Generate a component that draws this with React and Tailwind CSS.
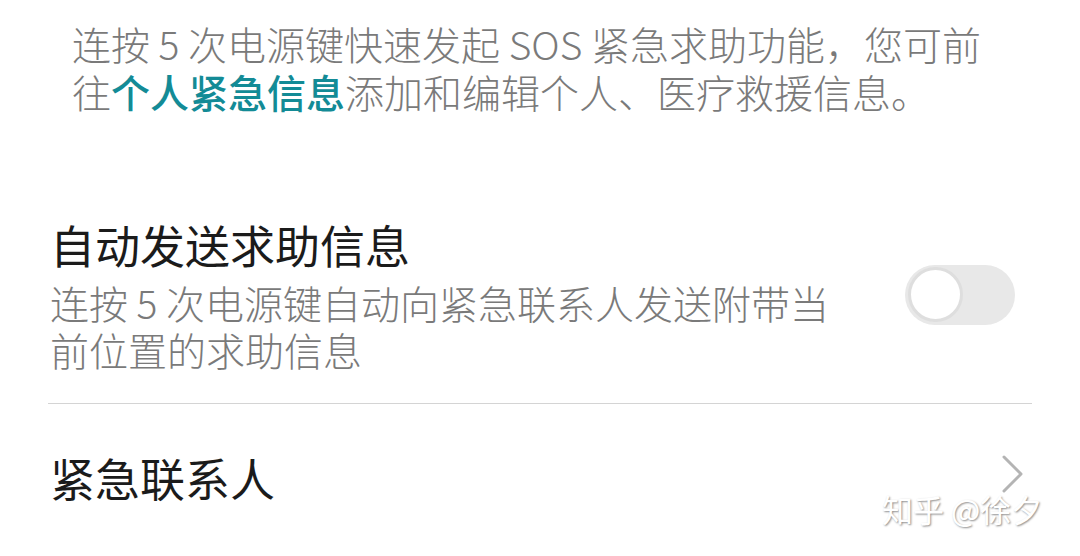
export default function App() {
  return (
    <div
      className="relative h-[556px] w-[1080px] overflow-hidden bg-white"
      style={{ fontFamily: '"Noto Sans CJK SC", "Noto Sans", sans-serif' }}
    >
      {/* 顶部说明 */}
      <p className="pl-[72px] pt-[19px] text-[39px] font-light leading-[48px] text-[#7a7a7a]">
        连按 5 次电源键快速发起 SOS 紧急求助功能，您可前
        <br />
        往<span className="font-medium text-[#138b96]">个人紧急信息</span>添加和编辑个人、医疗救援信息。
      </p>

      {/* 自动发送求助信息 */}
      <div className="mt-[102px] flex items-center pl-[50px] pr-[65px]">
        <div className="flex-1">
          <div className="text-[45px] leading-[56px] text-[#1b1b1b]">自动发送求助信息</div>
          <div className="mt-[6px] text-[39px] font-light leading-[47px] text-[#7a7a7a]">
            连按 5 次电源键自动向紧急联系人发送附带当
            <br />
            前位置的求助信息
          </div>
        </div>
        <div className="-mt-[1px] flex h-[60px] w-[110px] items-center rounded-full bg-[#e8e8e8] px-[3px]">
          <div className="h-[55px] w-[55px] rounded-full border-[3px] border-[#dedede] bg-white" />
        </div>
      </div>

      <div className="mx-[48px] mt-[30px] h-px bg-[#d4d4d4]" />

      {/* 紧急联系人 */}
      <div className="mt-[46px] flex items-center pl-[50px] pr-[55px]">
        <div className="flex-1 text-[45px] leading-[56px] text-[#1b1b1b]">紧急联系人</div>
        <svg width="24" height="40" viewBox="0 0 24 40" className="-mt-[8px]" fill="none">
          <path d="M3 3 L20 20 L3 37" stroke="#b4b4b4" strokeWidth="3" strokeLinecap="round" strokeLinejoin="round" />
        </svg>
      </div>

      {/* 水印 */}
      <div
        className="absolute left-[882px] top-[489px] text-[31px] leading-[40px] text-white"
        style={{ textShadow: '1px 1px 2px rgba(0,0,0,0.45)' }}
      >
        知乎 @徐夕
      </div>
    </div>
  );
}
